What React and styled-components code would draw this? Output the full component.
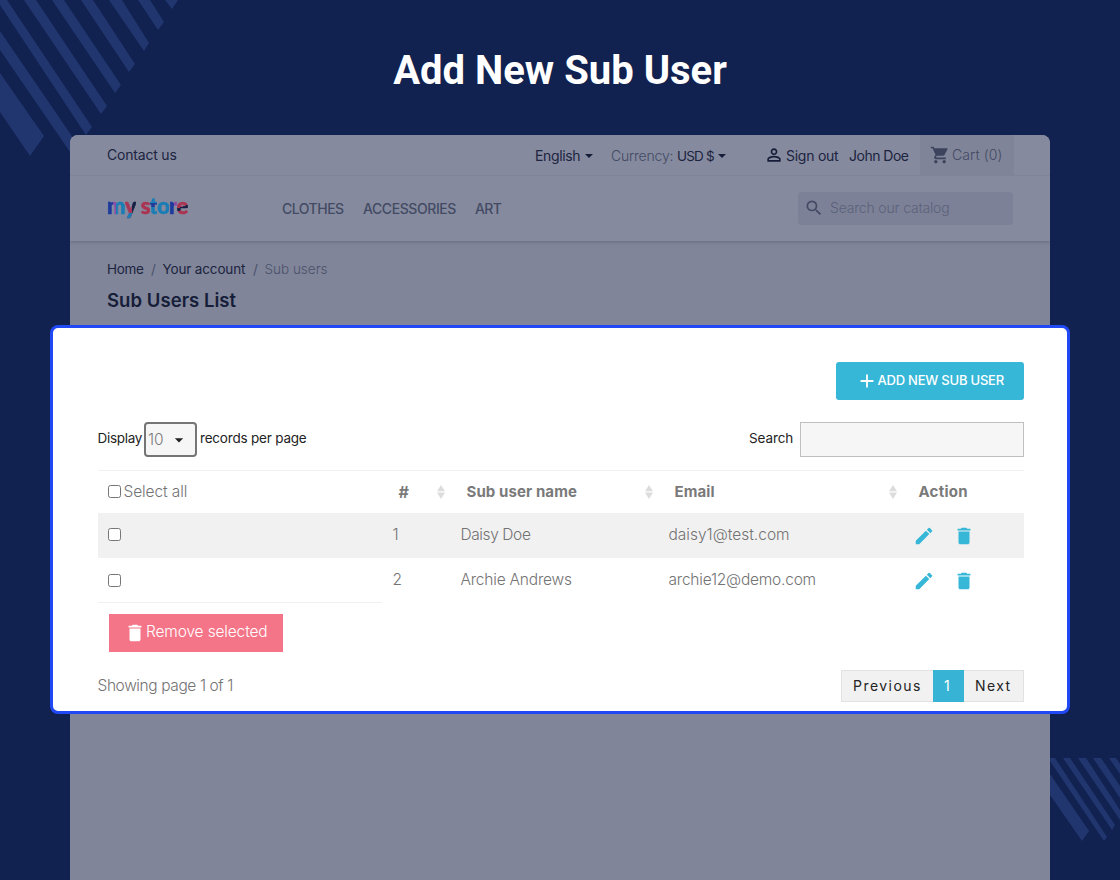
import React from 'react'
import styled, { createGlobalStyle } from 'styled-components'
import { MdPersonOutline, MdShoppingCart, MdSearch, MdAdd, MdEdit, MdDelete, MdArrowDropDown } from 'react-icons/md'

const GlobalStyle = createGlobalStyle`
    * {
        box-sizing: border-box;
    }
    body {
        margin: 0;
        font-family: Inter, 'Open Sans', sans-serif;
    }
    svg {
        display: block;
        flex: none;
    }
`;

const Page = styled.div`
    position: relative;
    width: 1120px;
    height: 880px;
    overflow: hidden;
    background-color: #112150;
`;

const Stripes = styled.svg`
    position: absolute;
    left: 0;
    top: 0;
    fill: #21366f;
`;

const Heading = styled.h1`
    position: relative;
    margin: 0;
    height: 135px;
    padding-top: 47px;
    font-family: Roboto, sans-serif;
    font-size: 40px;
    line-height: 48px;
    font-weight: 700;
    text-align: center;
    color: #ffffff;
`;

const Store = styled.div`
    position: relative;
    width: 980px;
    height: 745px;
    margin: 0 auto;
    border-radius: 8px 8px 0 0;
    background-color: #808599;
    overflow: hidden;
`;

const Header = styled.header`
    height: 106px;
    background-color: #858a9e;
    box-shadow: 0 1px 3px rgba(60, 68, 96, 0.4);
`;

const TopBar = styled.div`
    display: flex;
    height: 41px;
    padding: 0 36px 0 37px;
    border-bottom: 1px solid #7f8499;
`;

const NavBar = styled.div`
    display: flex;
    height: 65px;
    padding: 16px 37px 0;
`;

const Text = styled.span`
    display: block;
    flex: none;
    white-space: nowrap;
    font-size: ${props => props.$size || 14}px;
    line-height: 20px;
    font-weight: ${props => props.$weight || 400};
    letter-spacing: ${props => props.$spacing || 0}px;
    color: ${props => props.$color || '#1c2440'};
    width: ${props => props.$width ? `${props.$width}px` : 'auto'};
    margin-top: ${props => props.$top || 0}px;
`;

const Cart = styled.div`
    display: flex;
    width: 94px;
    height: 40px;
    margin-left: 11px;
    padding: 10px 0 0 10px;
    gap: 2px;
    background-color: #7f8498;
    color: #3c435c;
`;

const SearchCatalog = styled.div`
    display: flex;
    width: 215px;
    height: 33px;
    margin-left: auto;
    padding: 6px;
    gap: 6px;
    border-radius: 4px;
    background-color: #7c8197;
    color: #434a64;
`;

const Logo = styled.div`
    display: flex;
    width: 175px;
    font-family: Lato, sans-serif;
    font-size: 22px;
    line-height: 26px;
    font-weight: 900;
    letter-spacing: -0.8px;
    margin-top: 1px;
`;

const Letter = styled.span`
    height: 26px;
    background: ${props => props.$fill};
    background-clip: text;
    -webkit-background-clip: text;
    -webkit-text-stroke: 0.6px transparent;
    color: transparent;
    margin-left: ${props => props.$gap || 0}px;
`;

const Breadcrumb = styled.div`
    display: flex;
    margin: 18px 0 0 37px;
`;

const ListTitle = styled.h2`
    margin: 9px 0 0 37px;
    font-size: 18.5px;
    line-height: 24px;
    font-weight: 600;
    letter-spacing: 0.05px;
    color: #161d38;
`;

const Panel = styled.section`
    position: absolute;
    left: 50px;
    top: 325px;
    width: 1020px;
    height: 389px;
    padding: 34px 43.5px 0 44.5px;
    border: 3px solid #2049f5;
    border-radius: 8px;
    background-color: #ffffff;
`;

const AddButton = styled.div`
    display: flex;
    width: 187.5px;
    height: 38px;
    margin-left: auto;
    padding: 8px 0 0 19.5px;
    border-radius: 3px;
    background-color: #36b7d7;
    color: #ffffff;
`;

const Filters = styled.div`
    display: flex;
    height: 35px;
    margin-top: 22px;
`;

const PageSize = styled.div`
    display: flex;
    width: 53px;
    height: 35px;
    margin-right: 3px;
    padding: 6px 0 0 2px;
    border: 2px solid #757575;
    border-radius: 4px;
    background-color: #f6f6f6;
    color: #232323;
`;

const SearchInput = styled.div`
    width: 223.5px;
    height: 35px;
    border: 1px solid #bfbfbf;
    background-color: #f6f6f6;
`;

const Table = styled.div`
    margin-top: 13px;
    border-top: 1px solid #f1f1f1;
`;

const Row = styled.div`
    display: grid;
    grid-template-columns: 295px 68px 208px 244px 1fr;
    height: ${props => props.$height}px;
    background-color: ${props => props.$shade ? '#f1f1f1' : 'transparent'};
`;

const SelectCell = styled.div`
    display: flex;
    align-items: flex-start;
    gap: 3px;
    padding: ${props => props.$top}px 0 0 10px;
`;

const HeadCell = styled.div`
    display: flex;
    justify-content: space-between;
    padding: 11px 16px 0 6px;
`;

const Checkbox = styled.div`
    width: 13px;
    height: 13px;
    border: 1px solid #767676;
    border-radius: 2.5px;
    background-color: #ffffff;
`;

const Actions = styled.div`
    display: flex;
    gap: 18px;
    margin-top: ${props => props.$top}px;
    color: #36b7d7;
`;

const FootLine = styled.div`
    width: 284px;
    height: 1px;
    background-color: #f1f1f1;
`;

const RemoveButton = styled.div`
    display: flex;
    width: 174.5px;
    height: 38px;
    margin: 11px 0 0 11px;
    padding: 8px 0 0 15.5px;
    background-color: #f47488;
    color: #ffffff;
`;

const Footer = styled.div`
    display: flex;
    justify-content: space-between;
    margin-top: 18px;
`;

const Pager = styled.div`
    display: flex;
    height: 32px;
    border: 1px solid #e2e2e2;
    background-color: #f1f1f1;
`;

const PageLink = styled.div`
    width: ${props => props.$width}px;
    height: 32px;
    margin: -1px 0;
    padding: 6px 0 0 11px;
    font-size: 14px;
    line-height: 20px;
    letter-spacing: ${props => props.$spacing}px;
    background-color: ${props => props.$active ? '#36b3d5' : 'transparent'};
    color: ${props => props.$active ? '#ffffff' : '#232323'};
`;

const Caret = () => (
    <svg width="8" height="4" viewBox="0 0 8 4">
        <path d="M0 0h8L4 4z" fill="#161d38" />
    </svg>
)

const CaretBox = styled.div`
    width: ${props => props.$width}px;
    padding: 19px 0 0 4px;
`;

const SortIcon = () => (
    <svg width="8" height="14" viewBox="0 0 8 14" style={{ marginTop: 3 }}>
        <path d="M4 0l4 6.3H0zM4 14L0 7.5h8z" fill="#dcdcdc" />
    </svg>
)

const letters = [
    { char: 'm', fill: 'linear-gradient(90deg, #1d3a9c 0 32%, #8b4aa6 32% 50%, #1a7db5 50%)' },
    { char: 'y', fill: 'linear-gradient(180deg, transparent 0 78%, #1a7db5 78%), linear-gradient(90deg, #a63858 0 66%, #172145 66%)' },
    { char: 's', fill: '#ab3352', gap: 5 },
    { char: 't', fill: 'linear-gradient(180deg, #1a7db5 0 40%, #1d3a9c 40% 54%, #1a7db5 54%)' },
    { char: 'o', fill: '#1a7db5' },
    { char: 'r', fill: 'linear-gradient(90deg, #1d3a9c 0 58%, #8b4aa6 58%)' },
    { char: 'e', fill: 'linear-gradient(160deg, #ab3352 0 52%, #172145 52% 62%, #ab3352 62%)' },
]

const users = [
    { id: 1, name: 'Daisy Doe', email: 'daisy1@test.com', nameSpacing: -0.4, emailSpacing: 0 },
    { id: 2, name: 'Archie Andrews', email: 'archie12@demo.com', nameSpacing: -0.2, emailSpacing: -0.22 },
]

const cell = { $size: 15.5, $color: '#737373', $weight: 300 }
const head = { $size: 15, $color: '#7a7a7a', $weight: 700, $spacing: 0.1 }

const App = () => (
    <>
        <GlobalStyle />
        <Page>
            <Stripes width="1120" height="880">
                <path d="M0 73L44 136 30 156 0 112zM0 31L78 145 70 152 0 50zM0 0H7L92 127 86 135 0 5zM24 0H36L107 106 101 114zM52 0H64L121 85 115 93zM81 0H93L135 64 129 72zM109 0H122L149 43 144 51zM138 0H150L164 22 158 30zM165 0H178L172 9z" />
                <path d="M1050 774L1089 831 1082 841 1050 795zM1050 758H1055L1107 837 1104 841 1050 761zM1063 758H1070L1115 825 1112 830zM1078 758H1086L1120 810V820zM1093 758H1101L1120 786V798zM1109 758H1116L1120 764V774z" />
            </Stripes>
            <Heading>Add New Sub User</Heading>
            <Store>
                <Header>
                    <TopBar>
                        <Text $top={10} $width={428} $spacing={-0.2}>Contact us</Text>
                        <Text $top={11} $spacing={-0.35} $width={46}>English</Text>
                        <CaretBox $width={30}><Caret /></CaretBox>
                        <Text $top={11} $width={66} $weight={300} $color="#434a64" $spacing={-0.2}>Currency:</Text>
                        <Text $top={11} $size={13.5} $spacing={-0.8} $width={37}>USD $</Text>
                        <CaretBox $width={50}><Caret /></CaretBox>
                        <MdPersonOutline size={20} color="#161d38" style={{ marginTop: 10 }} />
                        <Text $top={11} $width={63} $spacing={-0.25} style={{ marginLeft: 2 }}>Sign out</Text>
                        <Text $top={11} $width={60} $spacing={-0.5}>John Doe</Text>
                        <Cart>
                            <MdShoppingCart size={20} />
                            <Text $weight={300} $color="#434a64" $spacing={0.1}>Cart (0)</Text>
                        </Cart>
                    </TopBar>
                    <NavBar>
                        <Logo>
                            {letters.map(l => <Letter key={l.char} $fill={l.fill} $gap={l.gap}>{l.char}</Letter>)}
                        </Logo>
                        <Text $top={7} $width={81} $weight={500} $color="#434a64" $spacing={-0.5}>CLOTHES</Text>
                        <Text $top={7} $width={112} $weight={500} $color="#434a64" $spacing={-0.42}>ACCESSORIES</Text>
                        <Text $top={7} $weight={500} $color="#434a64" $spacing={-0.6}>ART</Text>
                        <SearchCatalog>
                            <MdSearch size={20} />
                            <Text $weight={300} $color="#5b6179" $spacing={-0.18}>Search our catalog</Text>
                        </SearchCatalog>
                    </NavBar>
                </Header>
                <Breadcrumb>
                    <Text $size={13.5} $spacing={-0.3} $width={44}>Home</Text>
                    <Text $size={13.5} $width={11.5} $color="#4b526b">/</Text>
                    <Text $size={13.5} $spacing={-0.15} $width={90.5}>Your account</Text>
                    <Text $size={13.5} $width={11.5} $color="#4b526b">/</Text>
                    <Text $size={13.5} $weight={300} $color="#4b526b">Sub users</Text>
                </Breadcrumb>
                <ListTitle>Sub Users List</ListTitle>
            </Store>
            <Panel>
                <AddButton>
                    <MdAdd size={22} />
                    <Text $size={13} $weight={500} $color="#ffffff" $spacing={-0.22}>ADD NEW SUB USER</Text>
                </AddButton>
                <Filters>
                    <Text $size={13.5} $top={6} $width={46.5} $color="#232323" $spacing={-0.3}>Display</Text>
                    <PageSize>
                        <Text $size={15.5} $weight={300} $color="#7a7a7a" $width={21}>10</Text>
                        <MdArrowDropDown size={20} />
                    </PageSize>
                    <Text $size={13.5} $top={6} $color="#232323" $spacing={-0.2}>records per page</Text>
                    <Text $size={13.5} $top={6} $color="#232323" $width={51} $spacing={-0.1} style={{ marginLeft: 'auto' }}>Search</Text>
                    <SearchInput />
                </Filters>
                <Table>
                    <Row $height={42}>
                        <SelectCell $top={14}>
                            <Checkbox />
                            <Text {...cell} $top={-3} $spacing={-0.1}>Select all</Text>
                        </SelectCell>
                        <HeadCell><Text {...head} $size={16}>#</Text><SortIcon /></HeadCell>
                        <HeadCell><Text {...head}>Sub user name</Text><SortIcon /></HeadCell>
                        <HeadCell><Text {...head}>Email</Text><SortIcon /></HeadCell>
                        <HeadCell><Text {...head} $spacing={0.25}>Action</Text></HeadCell>
                    </Row>
                    {users.map((u, i) => (
                        <Row key={u.id} $height={i ? 44 : 45} $shade={i === 0}>
                            <SelectCell $top={i ? 16 : 15}><Checkbox /></SelectCell>
                            <Text {...cell} $top={12}>{u.id}</Text>
                            <Text {...cell} $top={12} $spacing={u.nameSpacing}>{u.name}</Text>
                            <Text {...cell} $top={12} $spacing={u.emailSpacing}>{u.email}</Text>
                            <Actions $top={12}>
                                <MdEdit size={22} />
                                <MdDelete size={22} />
                            </Actions>
                        </Row>
                    ))}
                    <FootLine />
                </Table>
                <RemoveButton>
                    <MdDelete size={22} />
                    <Text {...cell} $color="#ffffff" $spacing={-0.15}>Remove selected</Text>
                </RemoveButton>
                <Footer>
                    <Text {...cell} $top={6} $spacing={-0.4}>Showing page 1 of 1</Text>
                    <Pager>
                        <PageLink $width={91} $spacing={1.45}>Previous</PageLink>
                        <PageLink $width={31} $active>1</PageLink>
                        <PageLink $width={58.5} $spacing={1.4}>Next</PageLink>
                    </Pager>
                </Footer>
            </Panel>
        </Page>
    </>
)

export default App
